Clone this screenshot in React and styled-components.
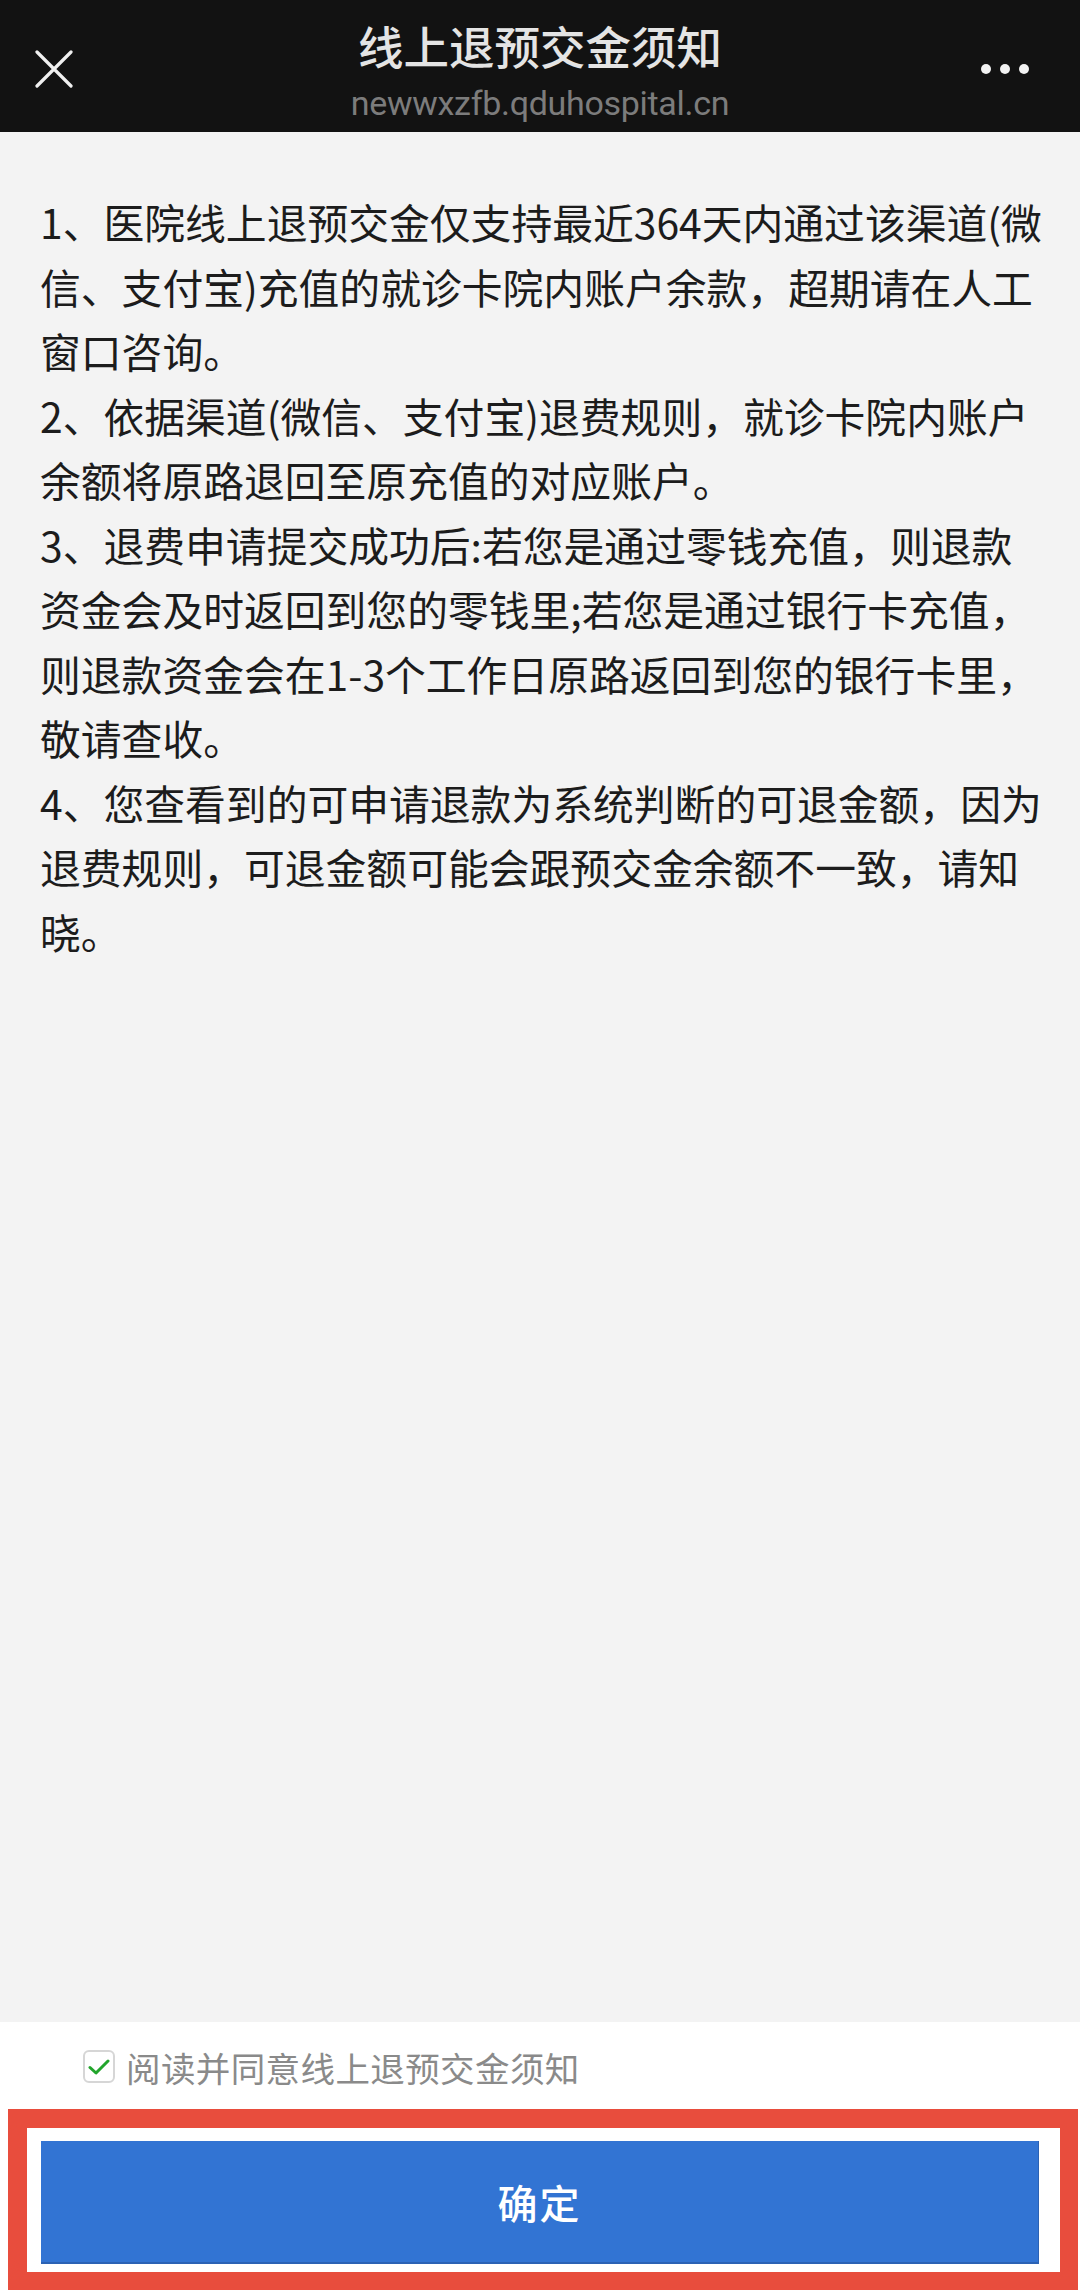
import React from "react";
import styled, { createGlobalStyle } from "styled-components";

const Global = createGlobalStyle`
  html, body { margin: 0; padding: 0; background: #f3f3f3; }
  * { box-sizing: border-box; }
  body { font-family: "Noto Sans CJK SC", "Noto Sans", sans-serif; }
`;

const Page = styled.div`
  display: flex;
  flex-direction: column;
  min-height: 100vh;
  width: 1080px;
`;

const Header = styled.header`
  position: relative;
  height: 132px;
  background: #121212;
  display: flex;
  flex-direction: column;
  align-items: center;
  padding-top: 17px;
`;

const Title = styled.h1`
  margin: 0;
  font-size: 45.5px;
  line-height: 56px;
  font-weight: 500;
  color: #e4e4e4;
  font-family: "Noto Sans CJK SC", sans-serif;
`;

const Url = styled.div`
  margin-top: 10px;
  font-size: 34px;
  line-height: 40px;
  color: #7c7c7c;
  font-family: "Roboto", "Liberation Sans", sans-serif;
  letter-spacing: -0.3px;
`;

const IconButton = styled.button`
  position: absolute;
  top: 50px;
  ${(p) => (p.$side === "left" ? "left: 35px;" : "right: 50px;")}
  width: ${(p) => (p.$side === "left" ? "38px" : "50px")};
  height: 38px;
  padding: 0;
  border: none;
  background: transparent;
  display: flex;
  align-items: center;
  justify-content: center;
  gap: 9px;
`;

const Dot = styled.span`
  width: 10px;
  height: 10px;
  border-radius: 50%;
  background: #f2f2f2;
`;

const Content = styled.main`
  flex: 1;
  background: #f3f3f3;
  padding: 58px 30px 0 40px;
`;

const Notice = styled.p`
  margin: 0;
  font-size: 40.8px;
  line-height: 64.5px;
  color: #1c1c1c;
  font-family: "Noto Sans CJK SC", sans-serif;
`;

const Line = styled.span`
  display: block;
  white-space: nowrap;
`;

const Footer = styled.footer`
  background: #ffffff;
  padding-top: 28px;
`;

const AgreeRow = styled.label`
  display: flex;
  align-items: center;
  gap: 11px;
  padding-left: 83px;
  height: 33px;
`;

const CheckBox = styled.span`
  flex: none;
  width: 32px;
  height: 33px;
  border: 2px solid #d6d6d6;
  border-radius: 6px;
  background: #fff;
  display: flex;
  align-items: center;
  justify-content: center;
`;

const AgreeText = styled.span`
  font-size: 34.5px;
  line-height: 40px;
  color: #8a8a8a;
  font-family: "Noto Sans CJK SC", sans-serif;
  letter-spacing: 0.4px;
`;

const Highlight = styled.div`
  margin: 26px 2px 0 8px;
  border: 19px solid #e84d3d;
  border-right-width: 18px;
  border-bottom-width: 18px;
  background: #ffffff;
  padding: 13px 21px 8px 14px;
`;

const ConfirmButton = styled.button`
  display: flex;
  align-items: center;
  justify-content: center;
  width: 100%;
  height: 123px;
  border: none;
  border-right: 1px solid #2b62b4;
  border-bottom: 2px solid #2b62b4;
  background: #3274d3;
  color: #ffffff;
  font-size: 40px;
  font-family: "Noto Sans CJK SC", sans-serif;
  font-weight: 500;
  letter-spacing: 2px;
  padding: 0;
`;

const items = [
  [
    "1、医院线上退预交金仅支持最近364天内通过该渠道(微",
    "信、支付宝)充值的就诊卡院内账户余款，超期请在人工",
    "窗口咨询。",
  ],
  [
    "2、依据渠道(微信、支付宝)退费规则，就诊卡院内账户",
    "余额将原路退回至原充值的对应账户。",
  ],
  [
    "3、退费申请提交成功后:若您是通过零钱充值，则退款",
    "资金会及时返回到您的零钱里;若您是通过银行卡充值，",
    "则退款资金会在1-3个工作日原路返回到您的银行卡里，",
    "敬请查收。",
  ],
  [
    "4、您查看到的可申请退款为系统判断的可退金额，因为",
    "退费规则，可退金额可能会跟预交金余额不一致，请知",
    "晓。",
  ],
];

export default function App() {
  return (
    <>
      <Global />
      <Page>
        <Header>
          <IconButton $side="left" aria-label="关闭">
            <svg width="38" height="38" viewBox="0 0 38 38">
              <path d="M2 2 L36 36 M36 2 L2 36" stroke="#f0f0f0" strokeWidth="3.2" strokeLinecap="round" />
            </svg>
          </IconButton>
          <Title>线上退预交金须知</Title>
          <Url>newwxzfb.qduhospital.cn</Url>
          <IconButton $side="right" aria-label="更多">
            <Dot />
            <Dot />
            <Dot />
          </IconButton>
        </Header>
        <Content>
          {items.map((lines) => (
            <Notice key={lines[0]}>
              {lines.map((l) => (
                <Line key={l}>{l}</Line>
              ))}
            </Notice>
          ))}
        </Content>
        <Footer>
          <AgreeRow>
            <CheckBox>
              <svg width="22" height="18" viewBox="0 0 22 18">
                <path d="M2 9.5 L8 15 L20 3" fill="none" stroke="#22a52c" strokeWidth="3" strokeLinecap="round" strokeLinejoin="round" />
              </svg>
            </CheckBox>
            <AgreeText>阅读并同意线上退预交金须知</AgreeText>
          </AgreeRow>
          <Highlight>
            <ConfirmButton>确定</ConfirmButton>
          </Highlight>
        </Footer>
      </Page>
    </>
  );
}
